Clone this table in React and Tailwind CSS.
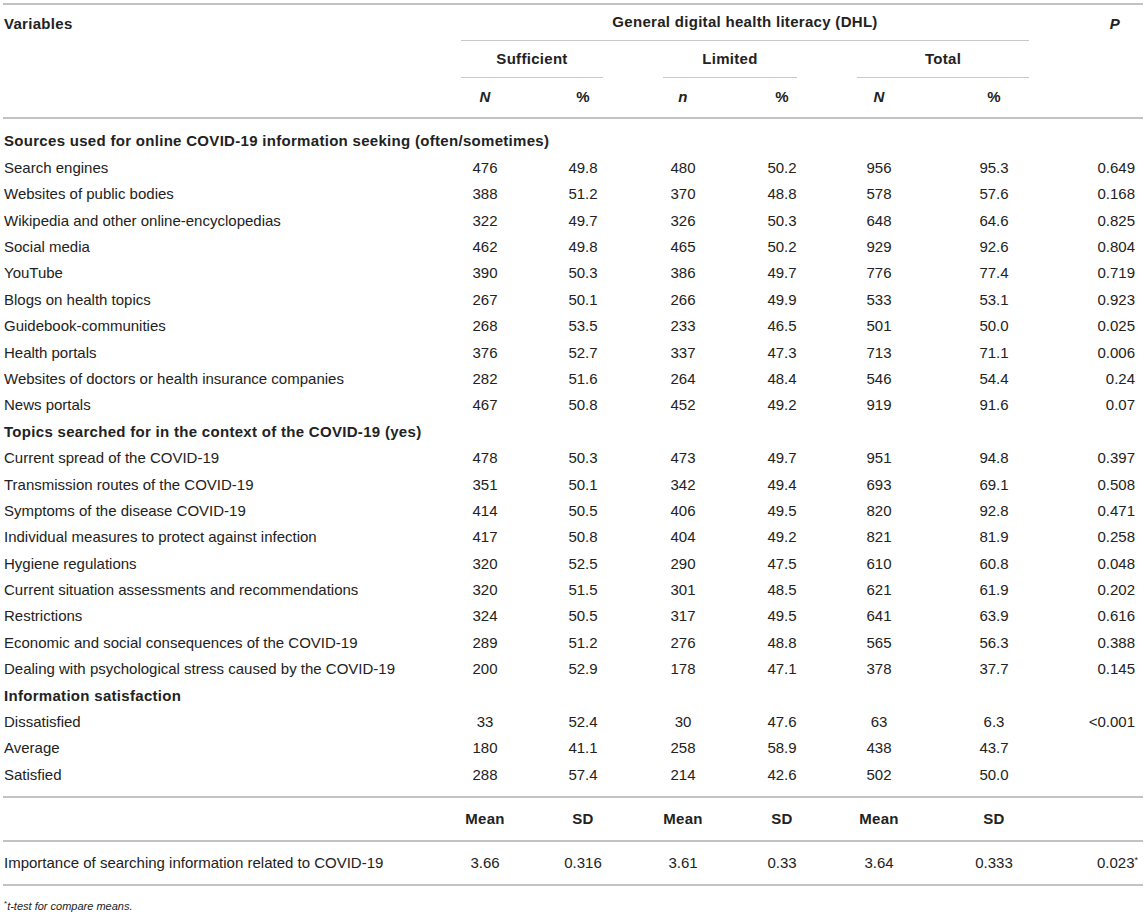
const sources = [
  ['Search engines', '476', '49.8', '480', '50.2', '956', '95.3', '0.649'],
  ['Websites of public bodies', '388', '51.2', '370', '48.8', '578', '57.6', '0.168'],
  ['Wikipedia and other online-encyclopedias', '322', '49.7', '326', '50.3', '648', '64.6', '0.825'],
  ['Social media', '462', '49.8', '465', '50.2', '929', '92.6', '0.804'],
  ['YouTube', '390', '50.3', '386', '49.7', '776', '77.4', '0.719'],
  ['Blogs on health topics', '267', '50.1', '266', '49.9', '533', '53.1', '0.923'],
  ['Guidebook-communities', '268', '53.5', '233', '46.5', '501', '50.0', '0.025'],
  ['Health portals', '376', '52.7', '337', '47.3', '713', '71.1', '0.006'],
  ['Websites of doctors or health insurance companies', '282', '51.6', '264', '48.4', '546', '54.4', '0.24'],
  ['News portals', '467', '50.8', '452', '49.2', '919', '91.6', '0.07'],
]

const topics = [
  ['Current spread of the COVID-19', '478', '50.3', '473', '49.7', '951', '94.8', '0.397'],
  ['Transmission routes of the COVID-19', '351', '50.1', '342', '49.4', '693', '69.1', '0.508'],
  ['Symptoms of the disease COVID-19', '414', '50.5', '406', '49.5', '820', '92.8', '0.471'],
  ['Individual measures to protect against infection', '417', '50.8', '404', '49.2', '821', '81.9', '0.258'],
  ['Hygiene regulations', '320', '52.5', '290', '47.5', '610', '60.8', '0.048'],
  ['Current situation assessments and recommendations', '320', '51.5', '301', '48.5', '621', '61.9', '0.202'],
  ['Restrictions', '324', '50.5', '317', '49.5', '641', '63.9', '0.616'],
  ['Economic and social consequences of the COVID-19', '289', '51.2', '276', '48.8', '565', '56.3', '0.388'],
  ['Dealing with psychological stress caused by the COVID-19', '200', '52.9', '178', '47.1', '378', '37.7', '0.145'],
]

const satisfaction = [
  ['Dissatisfied', '33', '52.4', '30', '47.6', '63', '6.3', '<0.001'],
  ['Average', '180', '41.1', '258', '58.9', '438', '43.7', ''],
  ['Satisfied', '288', '57.4', '214', '42.6', '502', '50.0', ''],
]

const cols = 'grid grid-cols-[433px_98px_98px_102px_96px_98px_132px_1fr]'

function DataRow({ row }) {
  return (
    <div className={`${cols} h-[26.4px] items-center`}>
      <div className="pl-[1px] whitespace-nowrap">{row[0]}</div>
      {row.slice(1, 7).map((v, i) => (
        <div key={i} className="text-center">{v}</div>
      ))}
      <div className="text-right pr-[8px]">{row[7]}</div>
    </div>
  )
}

function GroupRow({ title }) {
  return (
    <div className="h-[26.4px] flex items-center pl-[1px] font-bold tracking-[0.3px] whitespace-nowrap">{title}</div>
  )
}

export default function App() {
  return (
    <div className="w-[1146px] h-[916px] bg-white px-[3px] pt-[3px] text-[15px] text-[#222] font-['Liberation_Sans',Arial,sans-serif]">
      {/* Header */}
      <div className={`${cols} grid-rows-[36px_37px_39px] border-t-2 border-b-2 border-[#c2c2c2] tracking-[0.3px]`}>
        <div className="row-span-3 pl-[1px] pt-[8px] font-bold">Variables</div>
        <div className="col-span-6 ml-[25px] mr-[31px] flex items-center justify-center border-b border-[#c8c8c8] font-bold">
          General digital health literacy (DHL)
        </div>
        <div className="row-span-3 pt-[8px] pr-[23px] text-right font-bold italic">P</div>

        <div className="col-span-2 ml-[25px] mr-[29px] flex items-center justify-center border-b border-[#c8c8c8] font-bold">Sufficient</div>
        <div className="col-span-2 ml-[31px] mr-[33px] flex items-center justify-center border-b border-[#c8c8c8] font-bold">Limited</div>
        <div className="col-span-2 ml-[27px] mr-[31px] flex items-center justify-center border-b border-[#c8c8c8] font-bold">Total</div>

        <div className="flex items-center justify-center font-bold italic">N</div>
        <div className="flex items-center justify-center font-bold">%</div>
        <div className="flex items-center justify-center font-bold italic">n</div>
        <div className="flex items-center justify-center font-bold">%</div>
        <div className="flex items-center justify-center font-bold italic">N</div>
        <div className="flex items-center justify-center font-bold">%</div>
      </div>

      {/* Body */}
      <div className="pt-[9.5px] pb-[7.5px] border-b-2 border-[#c2c2c2]">
        <GroupRow title="Sources used for online COVID-19 information seeking (often/sometimes)" />
        {sources.map((r) => <DataRow key={r[0]} row={r} />)}
        <GroupRow title="Topics searched for in the context of the COVID-19 (yes)" />
        {topics.map((r) => <DataRow key={r[0]} row={r} />)}
        <GroupRow title="Information satisfaction" />
        {satisfaction.map((r) => <DataRow key={r[0]} row={r} />)}
      </div>

      {/* Means */}
      <div className={`${cols} h-[44px] items-center border-b-2 border-[#c2c2c2] font-bold tracking-[0.3px]`}>
        <div />
        <div className="text-center">Mean</div>
        <div className="text-center">SD</div>
        <div className="text-center">Mean</div>
        <div className="text-center">SD</div>
        <div className="text-center">Mean</div>
        <div className="text-center">SD</div>
        <div />
      </div>
      <div className={`${cols} h-[44px] items-center border-b-2 border-[#c2c2c2]`}>
        <div className="pl-[1px] whitespace-nowrap">Importance of searching information related to COVID-19</div>
        <div className="text-center">3.66</div>
        <div className="text-center">0.316</div>
        <div className="text-center">3.61</div>
        <div className="text-center">0.33</div>
        <div className="text-center">3.64</div>
        <div className="text-center">0.333</div>
        <div className="text-right pr-[5px]">0.023<sup className="text-[9px]">*</sup></div>
      </div>

      {/* Footnote */}
      <div className="pt-[12px] pl-[1px] text-[11px] italic leading-[16px]">
        <sup className="text-[8px] not-italic">*</sup>t-test for compare means.
      </div>
    </div>
  )
}
